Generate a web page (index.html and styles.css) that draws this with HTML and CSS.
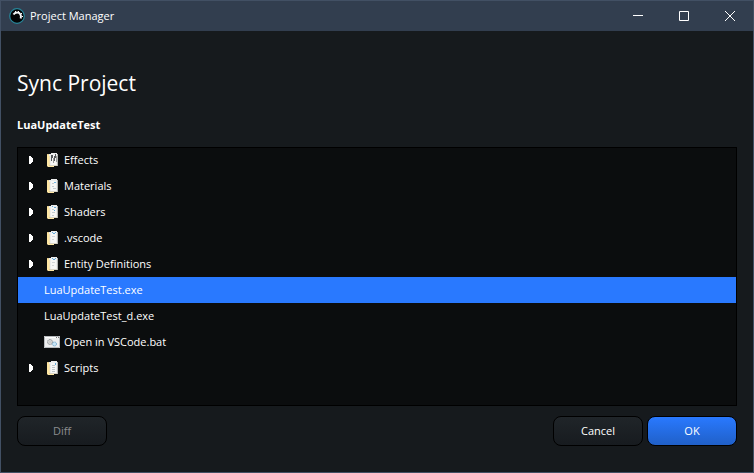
FILE: index.html
```
<!DOCTYPE html>
<html lang="en">
<head>
<meta charset="utf-8">
<title>Project Manager</title>
<link rel="stylesheet" href="styles.css">
</head>
<body>
<svg class="defs" aria-hidden="true">
  <symbol id="arrow" viewBox="0 0 4 8"><path d="M0 0h2v1h1v1h1v4H3v1H2v1H0z" fill="#fff"/></symbol>
  <symbol id="folder" viewBox="0 0 16 16">
    <path d="M3 2h4v12H3z" fill="#e8cf8f"/>
    <path d="M5 2h2V1h6v12H5z" fill="#eceded"/>
    <path d="M7 3h5v10H7z" fill="#f7f7f6"/>
    <path d="M13 2h1v12h-1z" fill="#b4b5b3"/>
    <path d="M3 3h2v11h5v1H4l-1-1z" fill="#ffe7a3"/>
    <path d="M5 4h1v9H5z" fill="#f4e2b4"/>
    <path d="M6 13h7v1H6z" fill="#d8d3c4"/>
  </symbol>
  <symbol id="script" viewBox="0 0 16 14">
    <path d="M0 1h16v12H0z" fill="#eeeff0"/>
    <path d="M0 1h16v2H0z" fill="#fff"/>
    <path d="M.5 1.500h15v11H.5z" fill="none" stroke="#b8bbbe"/>
    <path d="M12 2h1v1h-1zM14 2h1v1h-1z" fill="#777"/>
    <circle cx="6" cy="7" r="2.500" fill="#ddd" stroke="#85898d" stroke-dasharray="1.200 .5"/>
    <circle cx="6" cy="7" r="1" fill="#fff" stroke="#999" stroke-width=".5"/>
    <circle cx="10.500" cy="9" r="2" fill="#c9e6f7" stroke="#6ea6cc" stroke-dasharray="1.200 .5"/>
  </symbol>
</svg>
<div class="window">
  <header class="titlebar">
    <svg class="logo" viewBox="0 0 16 16" aria-hidden="true">
      <circle cx="8" cy="8" r="7.300" fill="#020405" stroke="#28869a" stroke-width="1.200"/>
      <path d="M4.500 6.500C6 4 10 3.800 11.500 6.500c.6 1.200.6 2.500.2 4" fill="none" stroke="#f4f6f7" stroke-width="2"/>
      <path d="M6 3h1v1H6zM9 3h1v1H9zM12 5h1v1h-1zM13 8h1v1h-1z" fill="#f4f6f7"/>
    </svg>
    <span class="caption">Project Manager</span>
    <div class="controls">
      <button type="button" aria-label="Minimize"><svg viewBox="0 0 10 10"><path d="M0 4.500h10" /></svg></button>
      <button type="button" aria-label="Maximize"><svg viewBox="0 0 10 10"><path d="M.5.5h9v9h-9z"/></svg></button>
      <button type="button" aria-label="Close"><svg viewBox="0 0 10 10"><path d="M0 0l10 10M10 0L0 10"/></svg></button>
    </div>
  </header>
  <main class="content">
    <h1>Sync Project</h1>
    <h2>LuaUpdateTest</h2>
    <div class="list">
      <ul class="tree">
        <li><button type="button" class="expand" aria-label="Expand Effects"><svg><use href="#arrow"/></svg></button><svg class="icon" viewBox="0 0 16 16"><use href="#folder"/><path d="M7 3h2v3H8v3H7zM11 2h1v4h-1v3h-1V4h1z" fill="#55585a"/><path d="M9 6h1v5H9zM12 4h1v6h-1z" fill="#999"/></svg>Effects</li>
        <li><button type="button" class="expand" aria-label="Expand Materials"><svg><use href="#arrow"/></svg></button><svg class="icon" viewBox="0 0 16 16"><use href="#folder"/><path d="M8 5h2v1H8zM8 8h2v1H8zM9 10h3v1H9z" fill="#c5cbd0"/><path d="M10 4h2v1h-2z" fill="#72b4df"/></svg>Materials</li>
        <li><button type="button" class="expand" aria-label="Expand Shaders"><svg><use href="#arrow"/></svg></button><svg class="icon" viewBox="0 0 16 16"><use href="#folder"/><path d="M8 5h2v1H8zM8 8h3v1H8zM8 11h2v1H8z" fill="#c5cbd0"/><path d="M8 2h1v1H8zM10 3h2v1h-2zM10 6h1v1h-1z" fill="#62a9d9"/></svg>Shaders</li>
        <li><button type="button" class="expand" aria-label="Expand .vscode"><svg><use href="#arrow"/></svg></button><svg class="icon" viewBox="0 0 16 16"><use href="#folder"/><path d="M8 6h3v1H8zM8 9h2v1H8z" fill="#d3d6d8"/><path d="M8 2h1v1H8zM9 3h2v1H9zM11 2h1v1h-1z" fill="#62a9d9"/></svg>.vscode</li>
        <li><button type="button" class="expand" aria-label="Expand Entity Definitions"><svg><use href="#arrow"/></svg></button><svg class="icon" viewBox="0 0 16 16"><use href="#folder"/><path d="M8 6h3v1H8zM8 9h2v1H8z" fill="#d3d6d8"/><path d="M8 2h1v1H8zM9 3h2v1H9zM11 2h1v1h-1z" fill="#62a9d9"/></svg>Entity Definitions</li>
        <li class="leaf selected">LuaUpdateTest.exe</li>
        <li class="leaf">LuaUpdateTest_d.exe</li>
        <li class="leaf"><svg class="icon" viewBox="0 0 16 14"><use href="#script"/></svg>Open in VSCode.bat</li>
        <li><button type="button" class="expand" aria-label="Expand Scripts"><svg><use href="#arrow"/></svg></button><svg class="icon" viewBox="0 0 16 16"><use href="#folder"/><path d="M8 5h3v1H8zM8 7h3v1H8zM8 9h3v1H8zM8 11h3v1H8z" fill="#c0c6ca"/><path d="M11 3h1v2h-1z" fill="#62a9d9"/></svg>Scripts</li>
      </ul>
    </div>
    <footer class="actions">
      <button type="button" class="btn diff" disabled>Diff</button>
      <button type="button" class="btn">Cancel</button>
      <button type="button" class="btn primary">OK</button>
    </footer>
  </main>
</div>
</body>
</html>
```
FILE: styles.css
```
* { box-sizing: border-box; }
body {
  margin: 0;
  background: #161a1d;
  color: #fff;
  font: 11px/16px "Open Sans", "Noto Sans", sans-serif;
}
button { font: inherit; color: inherit; }
.defs { position: absolute; width: 0; height: 0; }
.window {
  display: flex;
  flex-direction: column;
  min-height: 100vh;
  border: 1px solid #425064;
}
.titlebar {
  display: flex;
  align-items: center;
  height: 30px;
  padding-left: 8px;
  background: #323e4f;
}
.logo { width: 16px; height: 16px; margin-right: 5px; }
.controls { display: flex; margin-left: auto; }
.controls button {
  display: grid;
  place-items: center;
  width: 46px;
  height: 30px;
  padding: 0;
  border: 0;
  background: none;
}
.controls svg { width: 10px; height: 10px; fill: none; stroke: #fff; }
.content {
  display: flex;
  flex: 1;
  flex-direction: column;
  padding: 36px 16px 26px;
}
h1 { margin: 0 0 18px; font-size: 21px; line-height: 32px; font-weight: 400; }
h2 { margin: 0 0 14px; font-size: 11px; line-height: 16px; font-weight: 700; }
.list { flex: 1; border: 1px solid #000; background: #0b0d0e; }
.tree { margin: -1px 0 0; padding: 0; list-style: none; }
.tree li { display: flex; align-items: center; height: 26px; padding-left: 8px; }
.tree .leaf { padding-left: 26px; }
.tree .selected { background: #2979ff; }
.expand {
  display: grid;
  place-items: center;
  width: 10px;
  height: 16px;
  margin-right: 8px;
  padding: 0;
  border: 0;
  background: none;
}
.expand svg { width: 4px; height: 8px; }
.icon { width: 16px; height: 16px; margin-right: 4px; }
.actions { display: flex; gap: 4px; margin-top: 10px; }
.btn {
  width: 90px;
  height: 30px;
  padding: 0;
  border: 1px solid #000;
  border-radius: 8px;
  background: linear-gradient(#202529, #171b1f);
}
.diff { margin-right: auto; color: #8b8d8f; }
.primary { background: linear-gradient(#2979ff, #2060c8); }
```
